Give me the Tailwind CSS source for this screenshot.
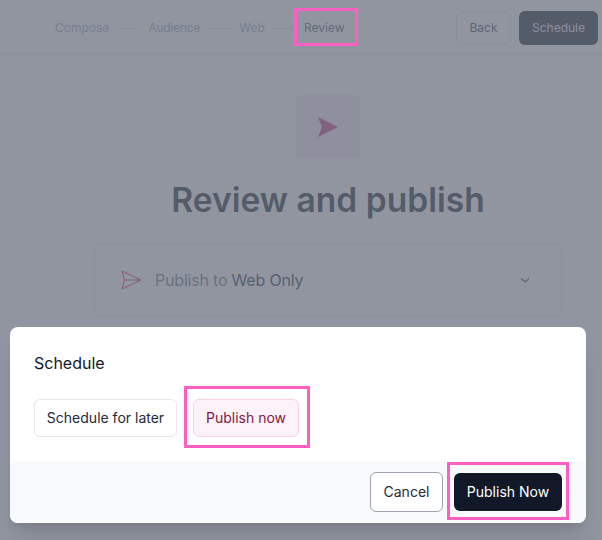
<!DOCTYPE html>
<html lang="en">
<head>
    <meta charset="UTF-8">
    <meta name="viewport" content="width=device-width, initial-scale=1.0">
    <title>Review and publish</title>
    <script src="https://cdn.jsdelivr.net/npm/@tailwindcss/browser@4"></script>
</head>
<body class="bg-white font-['Inter',sans-serif] antialiased">
    <div class="relative w-[602px] h-[540px] overflow-hidden">
        <!-- page behind the dialog -->
        <header class="flex items-start justify-between h-[54px] pl-[55px] pr-1 pt-[11px] border-b border-[#e5e7eb]">
            <nav class="flex items-center h-[34px] text-xs text-[#9ca3af]">
                <span>Compose</span>
                <span class="w-5 h-px bg-[#d1d5db] ml-[9px] mr-[10px]"></span>
                <span class="tracking-[-0.2px]">Audience</span>
                <span class="w-5 h-px bg-[#d1d5db] ml-[10px] mr-[9px]"></span>
                <span>Web</span>
                <span class="w-5 h-px bg-[#d1d5db] ml-[8px] mr-[11px]"></span>
                <span class="text-[#4b5563]">Review</span>
            </nav>
            <div class="flex items-center gap-2">
                <button class="w-[55px] h-[34px] rounded-md border border-[#e5e7eb] text-xs text-[#374151]">Back</button>
                <button class="w-[79px] h-[34px] rounded-md bg-[#111827] text-xs text-[#e5e7eb]">Schedule</button>
            </div>
        </header>
        <main class="flex flex-col items-center w-[468px] ml-[94px]">
            <div class="flex items-center justify-center w-16 h-16 mt-[41px] rounded bg-[#f6eef3]">
                <svg class="w-6 h-6" viewBox="0 0 24 24" fill="#c9337f"><path d="M2 2 L22 12 L2 22 L6 12 Z"/></svg>
            </div>
            <h1 class="mt-[20px] text-[33.6px] leading-[42px] font-semibold text-[#111827]">Review and publish</h1>
            <div class="flex items-center w-full h-[74px] mt-[22px] pl-[26px] pr-[30px] rounded-lg border border-[#e5e7eb]">
                <svg class="w-5 h-5 mr-[14px]" viewBox="0 0 20 20" fill="none" stroke="#db2777" stroke-width="1.1" stroke-linejoin="round"><path d="M1 1 L20 10 L1 19 L3.5 10 Z M3.5 10 H20"/></svg>
                <span class="text-base tracking-[-0.2px] text-[#6b7280]">Publish to <span class="text-[#1f2937]">Web Only</span></span>
                <svg class="w-3 h-3 ml-auto" viewBox="0 0 12 12" fill="none" stroke="#374151" stroke-width="1.1"><path d="M2 4.5 L6 8 L10 4.5"/></svg>
            </div>
        </main>

        <!-- overlay -->
        <div class="absolute inset-0 bg-[#6b7280]/75"></div>

        <!-- dialog -->
        <div class="absolute left-[10px] top-[327px] w-[576px] h-[196px] rounded-lg overflow-hidden bg-white shadow-xl flex flex-col">
            <div class="flex-1 px-6 pt-[26px]">
                <h2 class="text-base leading-5 text-[#111827]">Schedule</h2>
                <div class="flex gap-4 mt-[26px]">
                    <button class="w-[143px] h-[38px] rounded-md border border-[#e5e7eb] bg-white text-sm text-[#1f2937]">Schedule for later</button>
                    <button class="w-[106px] h-[38px] rounded-md border border-[#fbcfe8] bg-[#fdf2f8] text-sm text-[#831843]">Publish now</button>
                </div>
            </div>
            <div class="flex justify-end items-center gap-[11px] h-[62px] pr-6 bg-[#f9fafb]">
                <button class="w-[73px] h-[40px] rounded-md border border-[#9ca3af] bg-white text-sm text-[#1f2937]">Cancel</button>
                <button class="w-[108px] h-[38px] rounded-md bg-[#111827] text-sm text-white">Publish Now</button>
            </div>
        </div>

        <!-- annotation boxes -->
        <div class="absolute left-[294px] top-[8px] w-[64px] h-[38px] border-[3px] border-[#ff5fc0]"></div>
        <div class="absolute left-[184px] top-[386px] w-[126px] h-[62px] border-[3px] border-[#ff5fc0]"></div>
        <div class="absolute left-[447px] top-[462px] w-[122px] h-[58px] border-[3px] border-[#ff5fc0]"></div>
    </div>
</body>
</html>
